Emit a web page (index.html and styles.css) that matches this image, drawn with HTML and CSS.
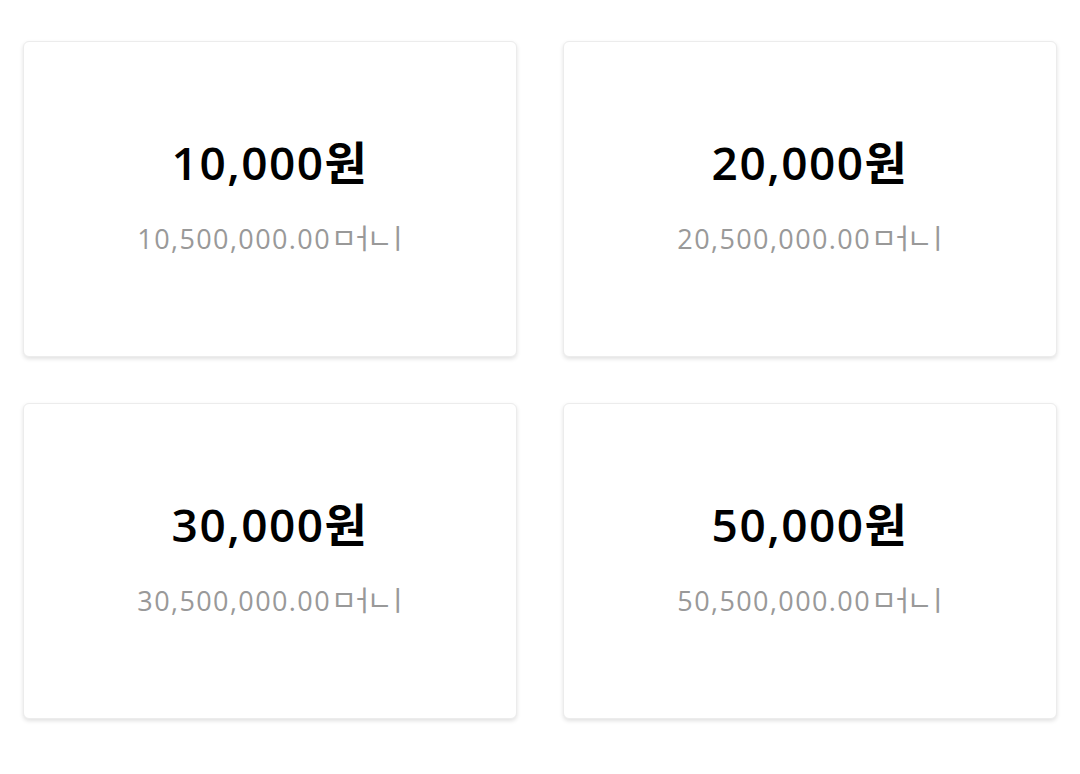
FILE: index.html
```html
<!DOCTYPE html>
<html lang="ko">
<head>
<meta charset="utf-8">
<link rel="stylesheet" href="styles.css">
</head>
<body>
<div class="grid">
  <div class="card"><div class="price">10,000원</div><div class="money">10,500,000.00<span class="unit">ㅁㅓㄴㅣ</span></div></div>
  <div class="card"><div class="price">20,000원</div><div class="money">20,500,000.00<span class="unit">ㅁㅓㄴㅣ</span></div></div>
  <div class="card"><div class="price">30,000원</div><div class="money">30,500,000.00<span class="unit">ㅁㅓㄴㅣ</span></div></div>
  <div class="card"><div class="price">50,000원</div><div class="money">50,500,000.00<span class="unit">ㅁㅓㄴㅣ</span></div></div>
</div>
</body>
</html>
```
FILE: styles.css
```css
html, body { margin: 0; background: #fff; }
body { font-family: "Open Sans", "Noto Sans CJK KR", sans-serif; }
.grid {
  display: grid;
  grid-template-columns: 494px 494px;
  gap: 46px;
  padding: 41px 23px;
}
.card {
  height: 316px;
  box-sizing: border-box;
  border-radius: 6px;
  background: #fff;
  border: 1px solid #ececec;
  box-shadow: 0 2px 4px rgba(0,0,0,0.12);
  display: flex;
  flex-direction: column;
  align-items: center;
  justify-content: center;
  padding-bottom: 8px;
}
.price {
  font-size: 46px;
  font-weight: 650;
  color: #000;
  line-height: 46px;
  letter-spacing: 1.5px;
}
.money {
  font-size: 27px;
  font-weight: 500;
  color: #999;
  line-height: 27px;
  margin-top: 39px;
  letter-spacing: 1.4px;
}
.unit {
  font-family: "Noto Sans CJK KR", sans-serif;
  font-size: 28px;
  font-weight: 400;
  letter-spacing: -0.28em;
}
```
